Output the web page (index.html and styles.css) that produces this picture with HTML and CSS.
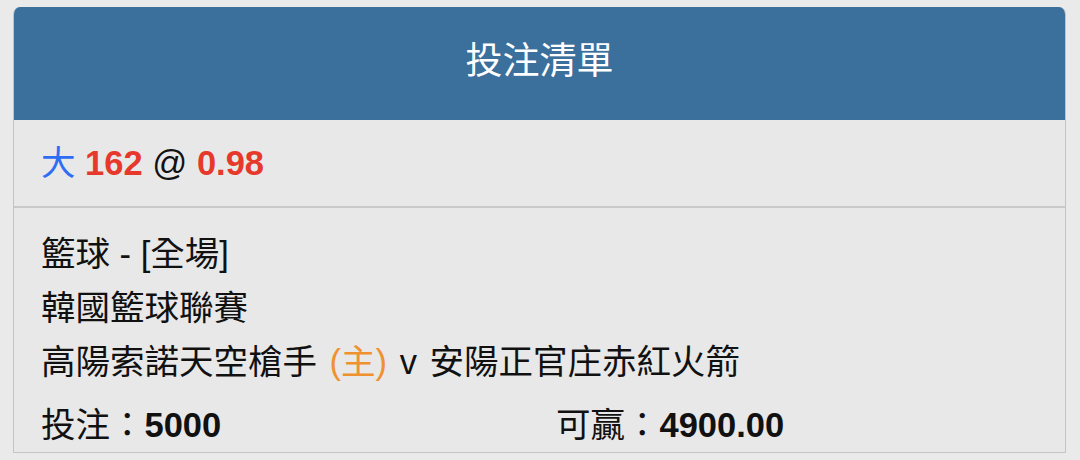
FILE: index.html
```html
<!DOCTYPE html>
<html lang="zh-Hant">
<head>
  <meta charset="UTF-8">
  <title>投注清單</title>
  <link rel="stylesheet" href="styles.css">
</head>
<body>

  <div class="slip">
    <div class="slip-head">投注清單</div>

    <div class="slip-odds">
      <span class="pick">大</span>
      <span class="num">162</span>
      <span class="at">@</span>
      <span class="num">0.98</span>
    </div>

    <div class="slip-body">
      <div class="line">籃球 - [全場]</div>
      <div class="line">韓國籃球聯賽</div>
      <div class="line teams">高陽索諾天空槍手 <span class="home">(主)</span> v 安陽正官庄赤紅火箭</div>

      <div class="amounts">
        <div class="amount">投注：<b>5000</b></div>
        <div class="amount">可贏：<b>4900.00</b></div>
      </div>
    </div>
  </div>

</body>
</html>
```

FILE: styles.css
```css
body {
  margin: 0;
  padding: 7px 14px 0 13px;
  background-color: #ebeaeb;
  font-family: "Liberation Sans", "Noto Sans CJK TC", sans-serif;
  color: #111;
}

.slip {
  background-color: #e8e8e8;
  border: 1px solid #c4c4c4;
  border-top: none;
  border-radius: 7px 7px 0 0;
  overflow: hidden;
}

.slip-head {
  height: 113px;
  line-height: 110px;
  text-align: center;
  background-color: #3b6f9c;
  color: #fff;
  font-size: 37px;
}

.slip-odds {
  height: 86px;
  line-height: 86px;
  padding-left: 27px;
  border-bottom: 2px solid #c9c9c9;
  font-size: 34.5px;
}

.slip-odds .pick {
  color: #2f6ef4;
}

.slip-odds .num {
  color: #e6392b;
  font-weight: bold;
}

.slip-odds .at {
  color: #111;
}

.slip-body {
  padding: 19px 27px 0 27px;
  font-size: 34.5px;
}

.line {
  line-height: 54px;
}

.teams {
  word-spacing: 3px;
}

.home {
  color: #f0912f;
}

.amounts {
  display: flex;
  margin-top: 9px;
  line-height: 54px;
}

.amount {
  flex: 0 0 515px;
}

.amount b {
  font-weight: bold;
}
```
